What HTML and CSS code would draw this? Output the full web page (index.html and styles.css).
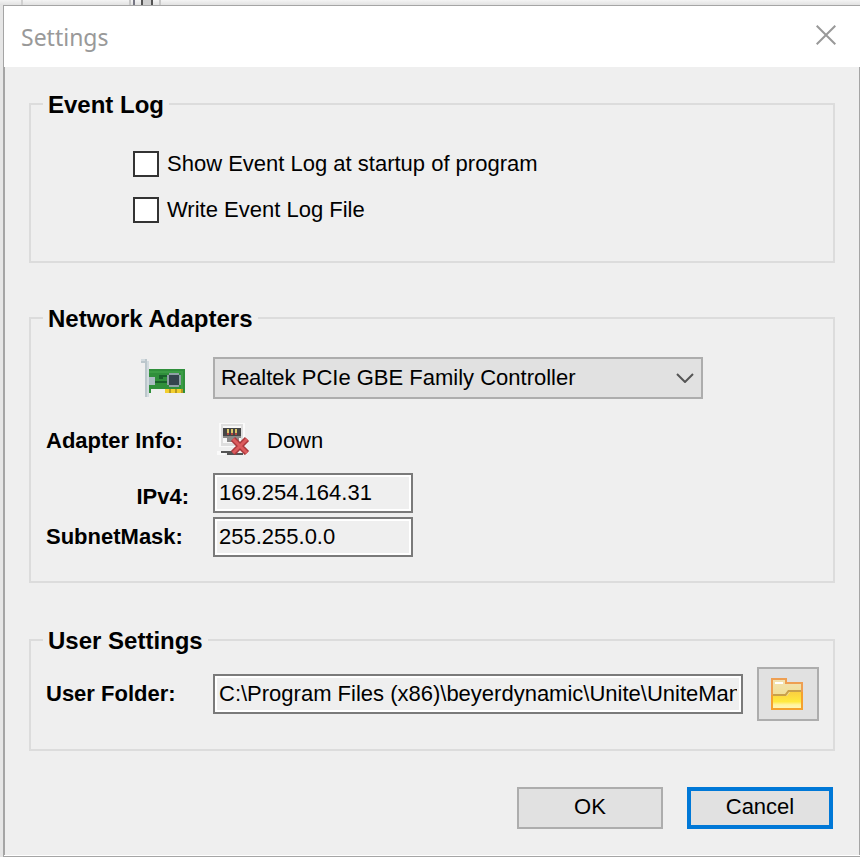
FILE: index.html
```html
<!DOCTYPE html>
<html lang="en">
<head>
<meta charset="utf-8">
<title>Settings</title>
<link rel="stylesheet" href="styles.css">
</head>
<body>
<div class="backdrop" aria-hidden="true"></div>
<main class="dialog">
  <header class="titlebar">
    <h1 class="title">Settings</h1>
    <button class="close" type="button" aria-label="Close">
      <svg width="20" height="20" viewBox="0 0 20 20" fill="none" stroke="#999" stroke-width="2"><path d="M.7.7l18.6 18.6M19.3.7L.7 19.3"/></svg>
    </button>
  </header>
  <form class="content">
    <fieldset class="group group-log">
      <legend>Event Log</legend>
      <label class="check"><input type="checkbox">Show Event Log at startup of program</label>
      <label class="check"><input type="checkbox">Write Event Log File</label>
    </fieldset>

    <fieldset class="group group-network">
      <legend>Network Adapters</legend>
      <div class="row row-adapter">
        <label class="caption caption-icon" for="adapter" aria-label="Adapter">
          <svg width="44" height="38" viewBox="0 0 44 38" shape-rendering="crispEdges">
            <path fill="#2f8f3b" d="M6 10h38v24H24v-4H10v4H6z"/>
            <path fill="#3b9d45" d="M8 12h34v2H8zM40 14h2v16h-2z"/>
            <path fill="#bcc7cc" d="M0 0h6v2h2v36H4V4H0z"/>
            <path fill="#d3dbdf" d="M0 0h4v2H0zM6 2h2v36H6z"/>
            <path fill="#a9bcc2" d="M8 18h6v8H8z"/>
            <path fill="#17602a" d="M18 16h8v2h-6v2h-2zM14 22h12v2H14zM20 18h2v2h-2z"/>
            <path fill="#8fa0a5" d="M28 14h10v2h2v10h-2v2H28v-2h-2V16h2z"/>
            <path fill="#34444d" d="M28 16h10v10H28z"/>
            <path fill="#f2cf2f" d="M24 30h18v4H24z"/>
            <path fill="#b99a20" d="M28 30h2v4h-2zM34 30h2v4h-2zM40 30h2v4h-2z"/>
          </svg>
        </label>
        <span class="combo">
          <select id="adapter"><option>Realtek PCIe GBE Family Controller</option></select>
          <svg class="chevron" width="18" height="10" viewBox="0 0 18 10" fill="none" stroke="#555" stroke-width="2"><path d="M1 1l8 8 8-8"/></svg>
        </span>
      </div>
      <div class="row row-info">
        <span class="caption">Adapter Info:</span>
        <svg class="status" width="34" height="32" viewBox="0 0 34 32">
          <path fill="#fafafa" d="M2 0h26v24H2zM0 28h8v4H0z"/>
          <path fill="#dedede" d="M4 1h22v22H4z"/>
          <path fill="#f8f8f8" d="M6 3h18v17H6z"/>
          <path fill="#8a8a8a" d="M6 5h18v10h-2v4H10v-4H6z"/>
          <path fill="#454545" d="M6 5h18v8H6z"/>
          <path stroke="#d9c66a" stroke-width="2" d="M11 6v4M15 6v4M19 6v4"/>
          <path fill="#b0463f" d="M10 10h2v2h-2zM14 10h2v2h-2zM18 10h2v2h-2z"/>
          <path fill="#555" d="M4 28h14v2h8v2H10v-2H4z"/>
          <path stroke="#a9383c" stroke-width="6" d="M16 16l14 14M30 16L16 30"/>
          <path stroke="#dc5b5d" stroke-width="3" d="M16 16l14 14M30 16L16 30"/>
        </svg>
        <span>Down</span>
      </div>
      <div class="row row-ip">
        <label class="caption caption-end" for="ipv4">IPv4:</label>
        <input class="field address" id="ipv4" type="text" value="169.254.164.31" readonly>
      </div>
      <div class="row row-mask">
        <label class="caption" for="mask">SubnetMask:</label>
        <input class="field address" id="mask" type="text" value="255.255.0.0" readonly>
      </div>
    </fieldset>

    <fieldset class="group group-user">
      <legend>User Settings</legend>
      <div class="row">
        <label class="caption" for="folder">User Folder:</label>
        <input class="field path" id="folder" type="text" value="C:\Program Files (x86)\beyerdynamic\Unite\UniteManager" readonly>
        <button class="browse" type="button" aria-label="Browse folder">
          <svg width="32" height="32" viewBox="0 0 32 32">
            <defs>
              <linearGradient id="front" x1="0" y1="0" x2="0" y2="1"><stop offset="0" stop-color="#fcd040"/><stop offset=".6" stop-color="#ffe93e"/><stop offset=".8" stop-color="#fff3a0"/><stop offset="1" stop-color="#fff6b0"/></linearGradient>
              <linearGradient id="back" x1="0" y1="0" x2="0" y2="1"><stop offset="0" stop-color="#f3e3b4"/><stop offset="1" stop-color="#eedb7c"/></linearGradient>
            </defs>
            <path fill="url(#back)" stroke="#ee9f52" stroke-width="2" d="M1 1h14v4h16v26H1z"/>
            <path fill="#fff" d="M4 4h8v2H4z"/>
            <path fill="#c9a04a" d="M2 16h12l3-4h13v2H18l-3 4H2z"/>
            <path fill="url(#front)" d="M2 18h14l3-4h11v16H2z"/>
            <path fill="none" stroke="#f5a22d" stroke-width="2" d="M1 17v14h30V14"/>
          </svg>
        </button>
      </div>
    </fieldset>

    <div class="actions">
      <button class="button" type="submit">OK</button>
      <button class="button button-default" type="button">Cancel</button>
    </div>
  </form>
</main>
</body>
</html>
```
FILE: styles.css
```css
* {
  box-sizing: border-box;
}

body {
  margin: 0;
  min-height: 100vh;
  display: flex;
  flex-direction: column;
  background: #e6e6e6;
  color: #000;
  font: 22px/24px "Liberation Sans", Arial, sans-serif;
}

/* Sliver of the window behind the dialog */
.backdrop {
  height: 5px;
  background:
    linear-gradient(#d0d0d0, #d0d0d0) 21px 0 / 2px 100% no-repeat,
    linear-gradient(#c8c8c8, #c8c8c8) 129px 0 / 2px 100% no-repeat,
    linear-gradient(#777784, #777784) 133px 0 / 2px 100% no-repeat,
    linear-gradient(#555, #555) 141px 0 / 2px 100% no-repeat,
    linear-gradient(#555, #555) 151px 0 / 2px 100% no-repeat,
    linear-gradient(#c8c8c8, #c8c8c8) 159px 0 / 2px 100% no-repeat,
    linear-gradient(#d0d0d0, #d0d0d0) 143px 0 / 8px 100% no-repeat,
    linear-gradient(#f4f4f4, #e2e2e2);
}

.dialog {
  flex: 1;
  display: flex;
  flex-direction: column;
  margin-left: 3px;
  border: solid #a5a5a5;
  border-width: 1px 0 1px 1px;
  background: #fff;
}

.titlebar {
  display: flex;
  align-items: center;
  justify-content: space-between;
  height: 61px;
  padding: 0 24px 3px 17px;
}

.title {
  margin: 0;
  padding-top: 4px;
  color: #999;
  font: 23px/32px "Noto Sans", "Open Sans", sans-serif;
}

.close {
  display: flex;
  padding: 0;
  border: 0;
  background: none;
}

.content {
  flex: 1;
  margin-bottom: 1px;
  padding: 24px 24px 26px;
  border: solid #a5a5a5;
  border-width: 0 1px;
  background: #efefef;
}

.group {
  min-width: 0;
  margin: 0 0 42px;
  padding: 0 14px 0 15px;
  border: 2px solid #dcdcdc;
}

.group legend {
  margin-left: -3px;
  padding: 2px 5px 0;
  font-size: 24px;
  font-weight: 700;
}

.group-log {
  padding-top: 34px;
  padding-bottom: 38px;
}

.check {
  display: flex;
  align-items: center;
  gap: 8px;
  margin-left: 87px;
}

.check + .check {
  margin-top: 20px;
}

.check input {
  appearance: none;
  width: 26px;
  height: 26px;
  margin: 0;
  border: 2px solid #333;
  background: #fff;
}

.group-network {
  padding-top: 26px;
  padding-bottom: 24px;
  margin-bottom: 44px;
}

.row {
  display: flex;
  align-items: center;
}

.row-info {
  align-items: flex-end;
  height: 32px;
  margin: 24px 0 18px;
  line-height: 28px;
}

.row-ip {
  align-items: flex-end;
  line-height: 32px;
}

.row-mask {
  margin-top: 4px;
}

.caption {
  flex: none;
  width: 143px;
  margin-right: 24px;
  font-weight: 700;
}

.caption-icon {
  display: flex;
  justify-content: flex-end;
  padding-right: 4px;
}

.caption-end {
  text-align: right;
}

.combo {
  position: relative;
  flex: 0 1 490px;
}

.combo select {
  appearance: none;
  display: block;
  width: 100%;
  height: 42px;
  padding: 0 36px 0 6px;
  border: 2px solid #adadad;
  border-radius: 0;
  background: #e1e1e1;
  color: #000;
  font: inherit;
}

.chevron {
  position: absolute;
  top: 16px;
  right: 9px;
  pointer-events: none;
}

.status {
  margin: 0 16px 0 4px;
}

.field {
  height: 40px;
  min-width: 0;
  padding: 0 4px;
  border: 2px solid #7a7a7a;
  box-shadow: inset 0 0 0 2px #fff;
  background: #efefef;
  color: #000;
  font: inherit;
}

.address {
  flex: 0 1 200px;
}

.path {
  flex: 1;
}

.browse {
  display: flex;
  align-items: center;
  justify-content: center;
  width: 62px;
  height: 54px;
  margin-left: 14px;
  padding: 0 2px 0 0;
  border: 2px solid #adadad;
  background: #e1e1e1;
}

.group-user {
  margin-bottom: 36px;
  padding-top: 14px;
  padding-bottom: 28px;
}

.actions {
  display: flex;
  justify-content: flex-end;
  gap: 24px;
  padding-right: 2px;
}

.button {
  width: 146px;
  height: 42px;
  padding: 0 0 2px;
  border: 2px solid #adadad;
  background: #e1e1e1;
  color: #000;
  font: inherit;
}

.button-default {
  border: 4px solid #0078d7;
}
```
